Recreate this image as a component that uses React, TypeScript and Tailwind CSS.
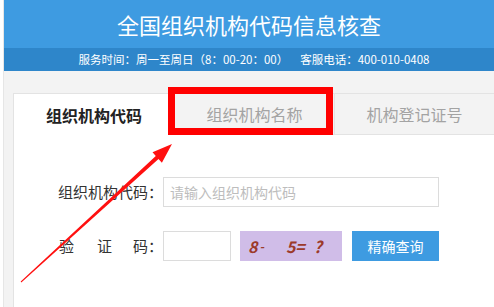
const tabs = ["组织机构代码", "组织机构名称", "机构登记证号"];

export default function App() {
  return (
    <div
      className="relative h-[307px] w-[494px] overflow-hidden bg-white pl-[3px]"
      style={{ fontFamily: '"Noto Sans CJK SC", "Noto Sans", sans-serif' }}
    >
      <div className="flex h-full flex-col border-l border-[#e6e6e6] bg-[#f3f3f3]">
        <header className="flex h-[48px] items-center justify-center bg-[#3e9be1] text-[22px] text-white">
          全国组织机构代码信息核查
        </header>
        <div className="flex h-[23px] items-center justify-center bg-[#2e86ca] pl-[10px] text-[11.5px] text-white">
          <span>服务时间：周一至周日（8：00-20：00）</span>
          <span className="ml-[12px]">客服电话：400-010-0408</span>
        </div>

        <div className="flex-1 pl-[9px] pt-[22px]">
          <div className="h-full border-l border-t border-[#e3e3e3] bg-white">
            <div className="grid h-[41px] grid-cols-[160px_160px_1fr]">
              {tabs.map((t, i) => (
                <div
                  key={t}
                  className={
                    i === 0
                      ? "flex items-center justify-center text-[16px] font-bold text-[#222]"
                      : "flex items-center justify-center border-b border-l border-[#e3e3e3] bg-[#f3f3f3] text-[16px] text-[#a3a3a3]"
                  }
                >
                  {t}
                </div>
              ))}
            </div>

            <div className="flex flex-col gap-[24px] pt-[42px]">
              <div className="flex items-center">
                <span className="w-[149px] text-right text-[15px] text-[#333]">组织机构代码：</span>
                <div className="flex h-[30px] w-[276px] items-center border border-[#dcdcdc] pl-[6px] text-[14px] text-[#bdbdbd]">
                  请输入组织机构代码
                </div>
              </div>
              <div className="flex items-center">
                <span className="flex w-[149px] justify-end text-[15px] text-[#333]">
                  <span>验</span>
                  <span className="ml-[23px]">证</span>
                  <span className="ml-[21px]">码：</span>
                </span>
                <div className="h-[30px] w-[68px] border border-[#dcdcdc]" />
                <div className="ml-[9px] flex h-[30px] w-[102px] items-center bg-[#d0bde8] pl-[8px] text-[16px] font-bold italic text-[#9c3a2a]">
                  <span>8</span>
                  <span className="ml-[2px] text-[12px]">-</span>
                  <span className="ml-[22px]">5=</span>
                  <span className="ml-[9px]">?</span>
                </div>
                <button className="ml-[10px] h-[30px] w-[87px] bg-[#3e9be1] text-[14px] text-white">
                  精确查询
                </button>
              </div>
            </div>
          </div>
        </div>
      </div>

      <div className="absolute left-[168px] top-[87px] h-[48px] w-[165px] border-[7px] border-[#ff0000]" />

      <svg className="absolute inset-0" width="494" height="307" viewBox="0 0 494 307">
        <polygon
          points="21.3,282.4 158.5,159 161.9,162.7 172,144 152.5,152.3 155.8,156 20.7,281.6"
          fill="#ff1010"
        />
      </svg>
    </div>
  );
}
